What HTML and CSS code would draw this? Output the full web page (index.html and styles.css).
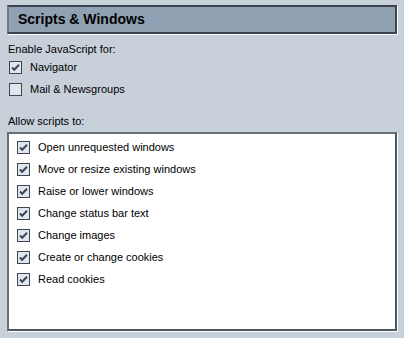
FILE: index.html
```html
<!DOCTYPE html>
<html lang="en">
<head>
  <meta charset="UTF-8">
  <title>Scripts &amp; Windows</title>
  <link rel="stylesheet" href="styles.css">
</head>
<body>

  <div class="panel-title">Scripts &amp; Windows</div>

  <!-- enable for -->
  <div class="group-label">Enable JavaScript for:</div>
  <div class="opts">
    <label class="opt">
      <svg class="cb" width="13" height="13" viewBox="0 0 13 13"><rect x="0.5" y="0.5" width="12" height="12" fill="#dfe6ee" stroke="#3f4650"/><path d="M3 6.5 L5.2 8.8 L10 3.8" fill="none" stroke="#3c4656" stroke-width="2"/></svg>
      Navigator
    </label>
    <label class="opt">
      <svg class="cb" width="13" height="13" viewBox="0 0 13 13"><rect x="0.5" y="0.5" width="12" height="12" fill="#dfe6ee" stroke="#3f4650"/></svg>
      Mail &amp; Newsgroups
    </label>
  </div>

  <!-- allow scripts -->
  <div class="group-label allow">Allow scripts to:</div>
  <div class="list-box" id="list"></div>

  <script>
    const items = [
      "Open unrequested windows",
      "Move or resize existing windows",
      "Raise or lower windows",
      "Change status bar text",
      "Change images",
      "Create or change cookies",
      "Read cookies"
    ];

    const list = document.getElementById("list");
    items.forEach(text => {
      const row = document.createElement("label");
      row.className = "opt";
      row.innerHTML = `
        <svg class="cb" width="13" height="13" viewBox="0 0 13 13"><rect x="0.5" y="0.5" width="12" height="12" fill="#dfe6ee" stroke="#3f4650"/><path d="M3 6.5 L5.2 8.8 L10 3.8" fill="none" stroke="#3c4656" stroke-width="2"/></svg>
        ${text}
      `;
      list.appendChild(row);
    });
  </script>

</body>
</html>
```

FILE: styles.css
```css
body {
  margin: 0;
  padding: 5px 7px 4px 7px;
  background: #c8d0da;
  font-family: "Liberation Sans", Arial, sans-serif;
  font-size: 11px;
  color: #000;
}

.panel-title {
  height: 25px;
  line-height: 25px;
  padding-left: 9px;
  background: #8fa1b3;
  border: 2px solid #3a4350;
  border-left-color: #6e7a88;
  box-shadow: 1px 1px 0 #fff;
  font-size: 14px;
  font-weight: bold;
}

.group-label {
  margin-top: 8px;
  padding-left: 1px;
  height: 14px;
  line-height: 14px;
}

.group-label.allow {
  margin-top: 14px;
}

.opts {
  padding-left: 2px;
}

.opt {
  display: flex;
  align-items: center;
  gap: 8px;
  height: 22px;
}

.cb {
  flex: none;
}

.list-box {
  margin-top: 4px;
  height: 193px;
  padding: 2px 0 0 8px;
  background: #fff;
  border: 2px solid #50565e;
  border-top-color: #6a7078;
  border-left-color: #6a7078;
  box-shadow: 1px 1px 0 #fff;
}
```
